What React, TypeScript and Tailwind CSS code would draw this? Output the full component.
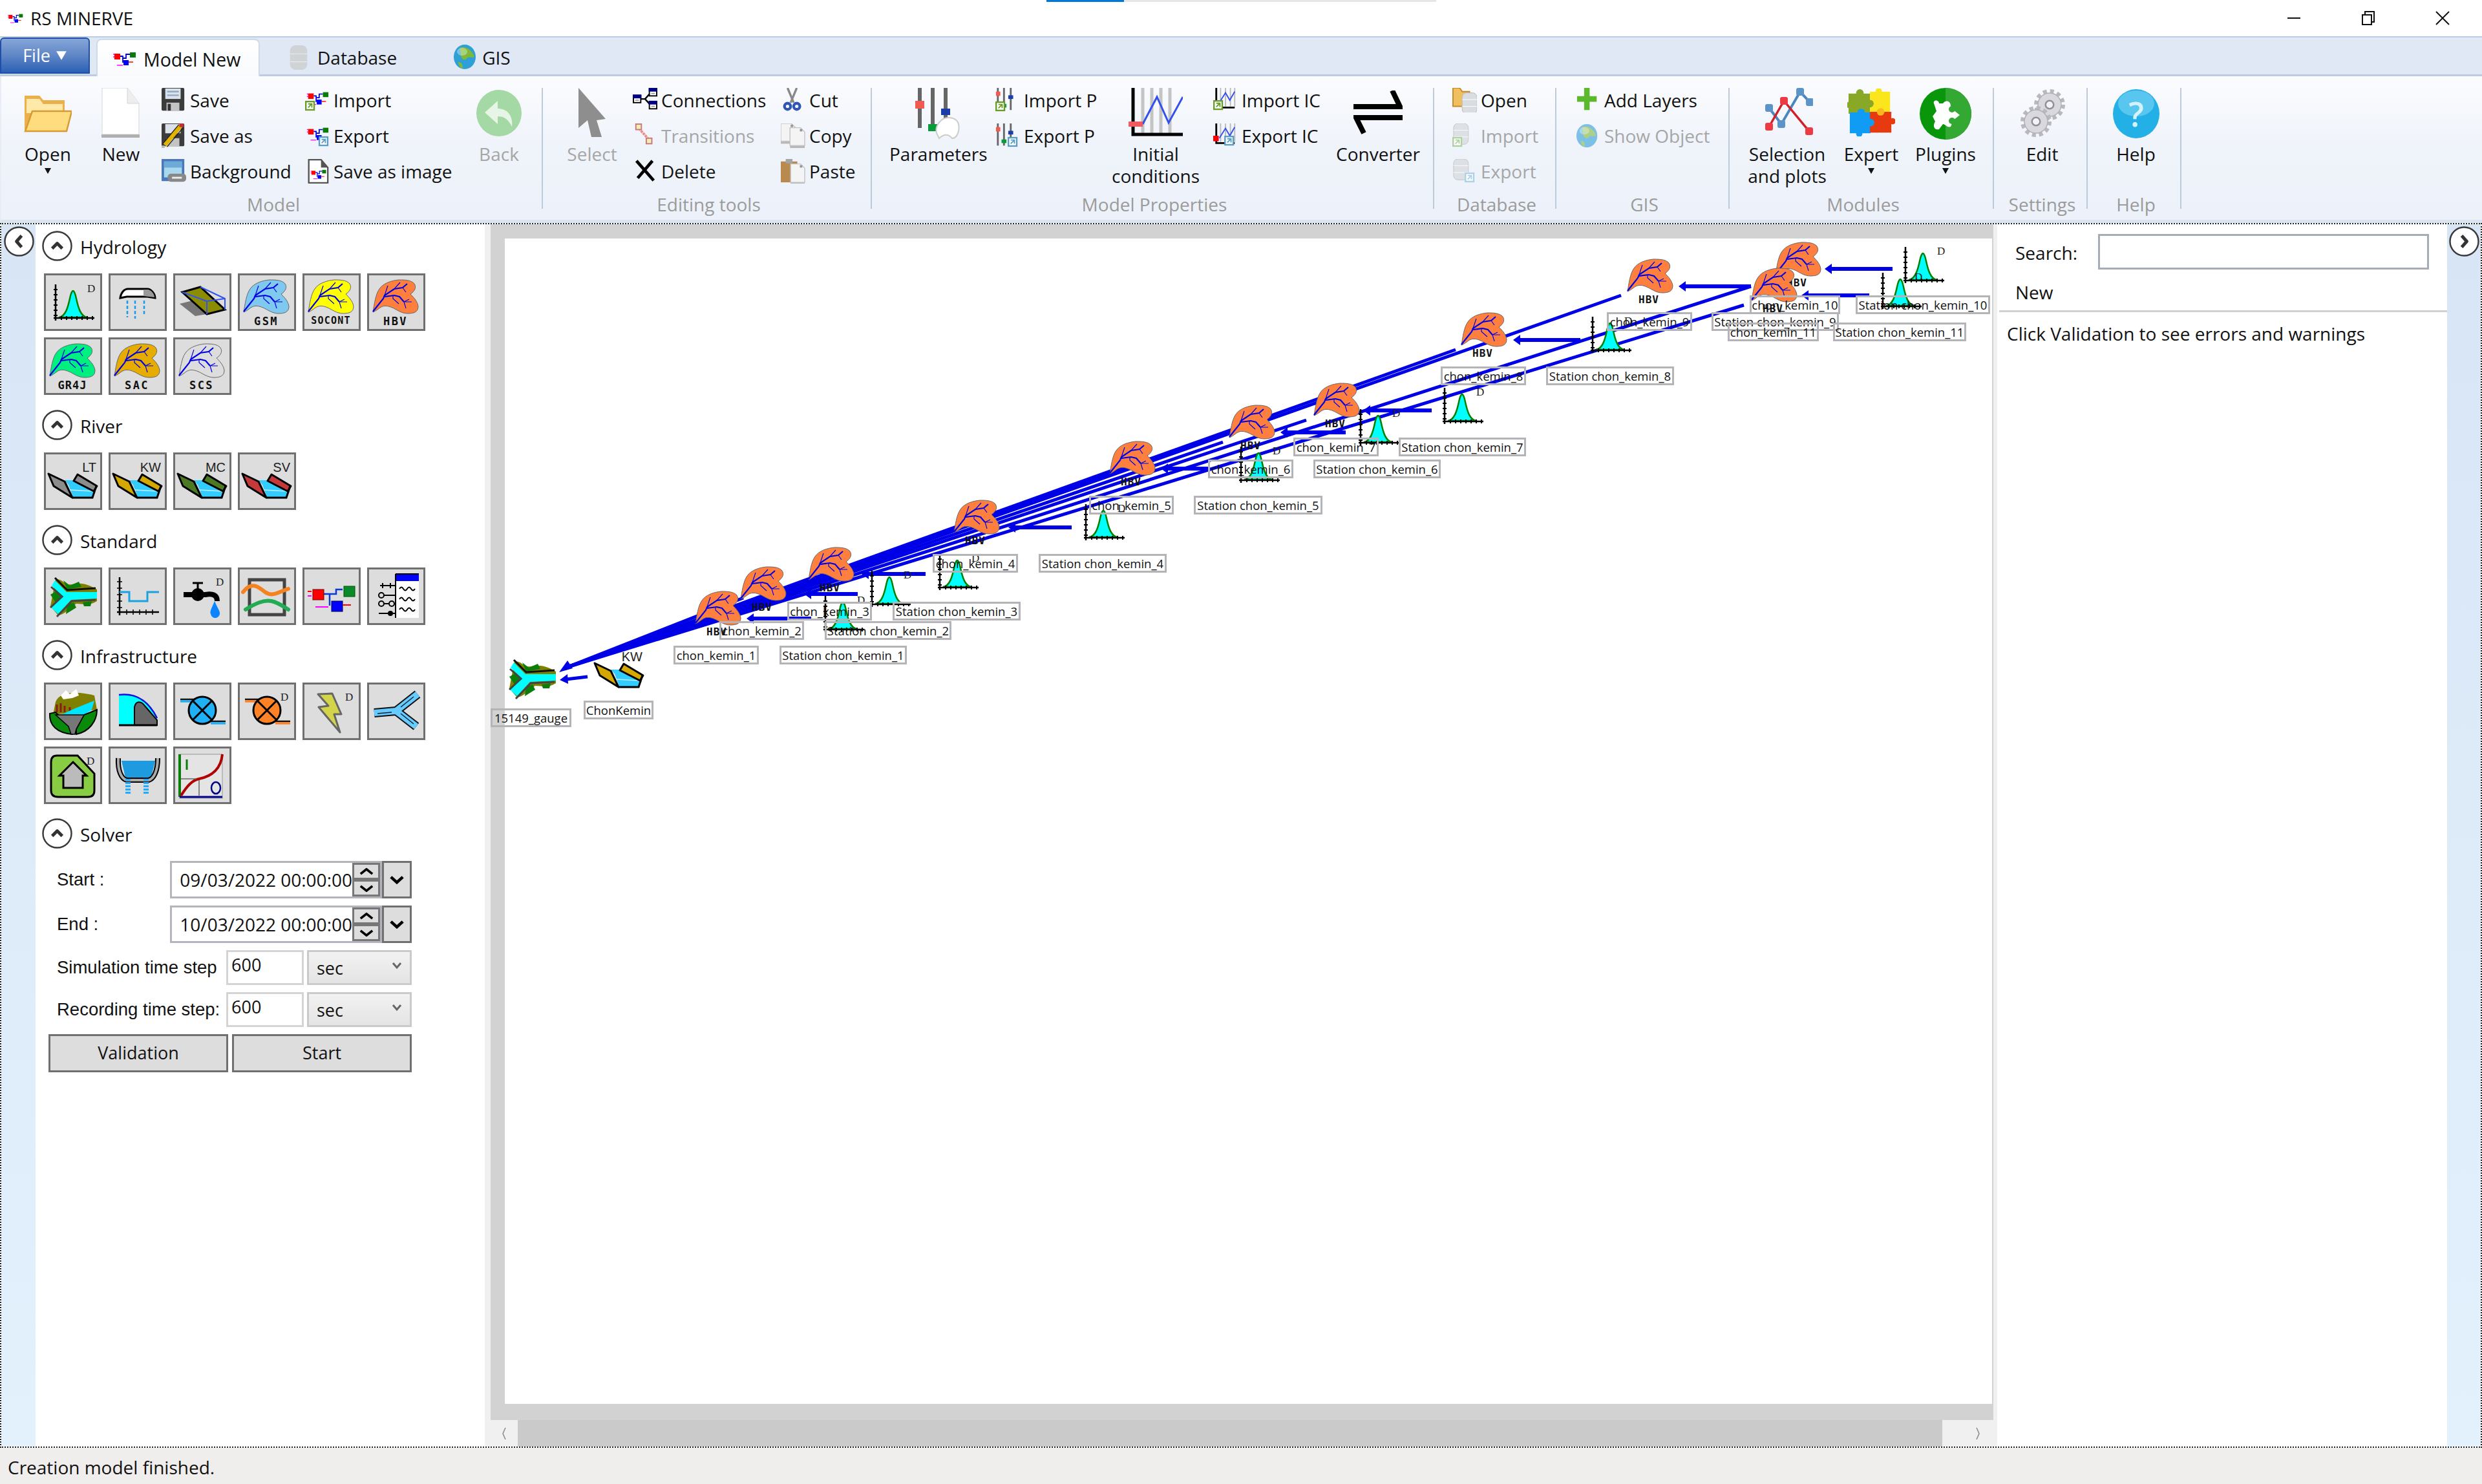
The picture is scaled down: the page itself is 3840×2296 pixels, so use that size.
import React from 'react';

const BLUE = '#0000e6';

// ---- shared drawings, coordinates are the 90x89 tool button space ----
const Leaf = ({ x = 0, y = 0, fill = '#ff7f3f' }: { x?: number; y?: number; fill?: string }) => (
  <g transform={`translate(${x} ${y})`}>
    <path
      d="M1 50 C3 38 5 22 11 14 C17 5 30 1 41 0 C50 0 60 0 65 6 C69 12 65 18 59 22 C63 26 70 33 71 41 C71 50 64 52 55 52 C45 52 38 46 31 43 C24 40 18 39 12 43 C8 46 4 49 1 50Z"
      fill={fill}
      stroke="#666"
      strokeWidth="1"
    />
    <path d="M1 49 L17 29 L19 24 L34 14 L47 12 L54 6 M19 26 L34 24 L42 26 L49 34" fill="none" stroke={BLUE} strokeWidth="2.2" />
    <path
      d="M19 24 L24 9 M34 14 L43 4 M47 12 L52 19 M49 34 L57 30 M49 34 L61 34 M49 34 L52 44 M32 24 V29 L41 37"
      fill="none"
      stroke={BLUE}
      strokeWidth="1.2"
    />
  </g>
);

const Hydrograph = ({ x = 0, y = 0 }: { x?: number; y?: number }) => (
  <g transform={`translate(${x} ${y})`}>
    <path d="M8 51 C18 50 22 36 25 22 C27 12 29 10 30 10 C31 10 33 12 35 22 C38 36 42 50 52 51Z" fill="#00ffff" stroke="#008000" strokeWidth="2.5" />
    <path d="M3 0 V56 M0 52 H63" stroke="#000" strokeWidth="2.5" />
    <path d="M0 8 H6 M0 16 H6 M0 24 H6 M0 32 H6 M0 40 H6 M0 48 H6 M12 49 V55 M20 49 V55 M28 49 V55 M36 49 V55 M44 49 V55 M52 49 V55 M60 49 V55" stroke="#000" strokeWidth="2" />
    <text x="52" y="12" fontFamily="Liberation Serif, serif" fontSize="17" fill="#222">D</text>
  </g>
);

const DMark = () => (
  <text x="66" y="28" fontFamily="Liberation Serif, serif" fontSize="17" fill="#222">D</text>
);

const GaugeIcon = () => (
  <g>
    <path d="M18 18 C30 18 32 28 44 26 C60 22 72 28 82 34 L82 52 C70 60 60 56 50 56 C40 62 34 72 22 74 L10 60 Z" fill="#808000" />
    <path d="M30 20 L40 28 L54 22 L58 30 L36 34Z M10 42 L24 34 L30 46 L18 54Z M36 58 L46 54 L50 62 L34 72Z M60 54 L74 52 L72 60 L62 60Z" fill="#0a7d0a" />
    <polygon points="17,20 35,38 82,38 82,48 42,50 22,72 11,62 30,45 12,28" fill="#00ffff" />
    <path d="M17 16 L36 35 L80 32" fill="none" stroke="#111" strokeWidth="3" />
    <path d="M11 30 L28 45 L10 62 M20 76 L43 52 L80 50" fill="none" stroke="#444" strokeWidth="3" />
  </g>
);

const RiverIcon = ({ fill, label }: { fill: string; label: string }) => (
  <g>
    <polygon points="32,43 56,43 80,61 75,69 45,69 38,50" fill="#33ccff" />
    <path d="M40 58 L76 60" stroke="#bdf0ff" strokeWidth="1.5" />
    <polygon points="7,33 32,45 44,70 15,52" fill={fill} stroke="#000" strokeWidth="3" strokeLinejoin="round" />
    <polygon points="52,34 82,52 77,60 46,44" fill={fill} stroke="#000" strokeWidth="3" strokeLinejoin="round" />
    <path d="M44 70 H75 L81 52" fill="none" stroke="#000" strokeWidth="3" />
    <text x="81" y="30" textAnchor="end" fontFamily="Liberation Sans, sans-serif" fontSize="20" fill="#222">{label}</text>
  </g>
);

const Catchment = ({ fill, tag, size = 17, spacing = 2.5, base = 80 }: { fill: string; tag: string; size?: number; spacing?: number; base?: number }) => (
  <g>
    <Leaf x={8} y={10} fill={fill} />
    <text x="44" y={base} textAnchor="middle" fontFamily="DejaVu Sans Mono, monospace" fontWeight="700" fontSize={size} letterSpacing={spacing} fill="#111">{tag}</text>
  </g>
);

const Pump = ({ fill, pipe }: { fill: string; pipe: string }) => (
  <g>
    <path d="M11 26 H36 M58 60 H81" stroke="#111" strokeWidth="2.5" />
    <path d="M11 30 H36 M58 64 H81" stroke={pipe} strokeWidth="3.5" transform="translate(0 -1)" />
    <circle cx="45" cy="43" r="21" fill={fill} stroke="#000" strokeWidth="3" />
    <path d="M31 29 L59 57 M59 29 L31 57" stroke="#000" strokeWidth="3" />
  </g>
);

const toolIcons: Record<string, React.ReactNode> = {
  hydrograph: <Hydrograph x={15} y={17} />,
  rain: (
    <g>
      <path d="M18 38 C19 30 24 24 30 24 H60 C66 24 72 32 72 38 L60 36 H28Z" fill="#fff" stroke="#000" strokeWidth="3" />
      <path d="M54 25 H60 C66 25 71 32 71 37 L54 35Z" fill="#999" />
      <path d="M29 42 V68 M41 42 V70 M55 42 V66" stroke="#1a9be8" strokeWidth="2.5" strokeDasharray="5 3" />
    </g>
  ),
  plane: (
    <g>
      <polygon points="10,47 38,40 52,63 34,66" fill="#777" />
      <polygon points="14,29 42,21 80,56 52,63" fill="#8c8c00" stroke="#000" strokeWidth="3" />
      <path d="M42 21 L80 39 V56 M14 29 L52 43 V63 M52 43 L80 39" fill="none" stroke="#3355ee" strokeWidth="2" />
    </g>
  ),
  gsm: <Catchment fill="#7fc8f0" tag="GSM" />,
  socont: <Catchment fill="#ffff00" tag="SOCONT" size={15} spacing={1.2} base={78} />,
  hbv: <Catchment fill="#ff7f3f" tag="HBV" />,
  gr4j: <Catchment fill="#00f07f" tag="GR4J" spacing={1} />,
  sac: <Catchment fill="#e6ac00" tag="SAC" />,
  scs: <Catchment fill="#dddddd" tag="SCS" />,
  lt: <RiverIcon fill="#8c8c8c" label="LT" />,
  kw: <RiverIcon fill="#d4a800" label="KW" />,
  mc: <RiverIcon fill="#4c7a22" label="MC" />,
  sv: <RiverIcon fill="#c43a3a" label="SV" />,
  gauge: <GaugeIcon />,
  step: (
    <g>
      <path d="M17 15 V74 M13 69 H78" stroke="#000" strokeWidth="2.5" />
      <path d="M13 22 H21 M13 32 H21 M13 42 H21 M13 52 H21 M13 62 H21 M28 65 V73 M38 65 V73 M48 65 V73 M58 65 V73 M68 65 V73" stroke="#000" strokeWidth="1.5" />
      <path d="M17 38 H32 V52 H60 V38 H78" fill="none" stroke="#1ba1e2" strokeWidth="3" />
    </g>
  ),
  tap: (
    <g>
      <path d="M16 42 H50 C60 40 68 42 68 52" fill="none" stroke="#000" strokeWidth="8" />
      <circle cx="38" cy="42" r="10" fill="#000" />
      <path d="M30 24 H46 M38 24 V34" stroke="#000" strokeWidth="3" />
      <path d="M64 52 C60 62 56 68 58 72 C60 80 70 80 72 72 C73 68 68 62 64 52Z" fill="#0a84ff" />
      <DMark />
    </g>
  ),
  curves: (
    <g>
      <rect x="18" y="19" width="54" height="54" fill="none" stroke="#444" strokeWidth="5" />
      <path d="M8 38 C20 22 30 28 42 38 C54 46 62 38 78 33" fill="none" stroke="#f58220" strokeWidth="6" strokeLinecap="round" />
      <path d="M12 65 C28 55 40 50 52 52 C62 54 70 60 78 65" fill="none" stroke="#22aa55" strokeWidth="6" strokeLinecap="round" />
    </g>
  ),
  model: (
    <g>
      <path d="M33 41 H42 V59 M42 41 H52 V34 H62" fill="none" stroke="#0a3ad6" strokeWidth="2.5" />
      <rect x="16" y="34" width="17" height="16" fill="#ff0000" stroke="#700" />
      <rect x="64" y="29" width="17" height="16" fill="#0a8a2a" stroke="#050" />
      <rect x="45" y="52" width="17" height="16" fill="#0000ff" stroke="#004" />
      <path d="M8 37 H14" stroke="#f00" strokeWidth="2" />
      <path d="M8 44 H14 M20 61 H40" stroke="#f0f" strokeWidth="2" />
      <path d="M62 58 H75" stroke="#f00" strokeWidth="2" />
    </g>
  ),
  list: (
    <g>
      <rect x="45" y="10" width="35" height="68" fill="#fff" />
      <rect x="44" y="11" width="36" height="10" fill="#0000ff" />
      <path d="M44 10 H80 M44 10 V78" stroke="#000" strokeWidth="2" />
      <path d="M20 28 H44 M24 24 V32 M36 24 V32 M26 43 H44 M18 71 H44" stroke="#000" strokeWidth="2" fill="none" />
      <circle cx="22" cy="43" r="4" fill="none" stroke="#000" strokeWidth="2" />
      <circle cx="22" cy="56" r="4" fill="none" stroke="#000" strokeWidth="2" />
      <circle cx="38" cy="56" r="4" fill="none" stroke="#000" strokeWidth="2" />
      <path d="M26 56 H34 M42 56 H44" stroke="#000" strokeWidth="2" />
      <circle cx="36" cy="71" r="4" fill="#000" />
      <path d="M50 33 q3 -5 6 0 t6 0 t6 0 t6 0 M50 49 q3 -5 6 0 t6 0 t6 0 t6 0 M50 65 q3 -5 6 0 t6 0 t6 0 t6 0" fill="none" stroke="#000" strokeWidth="2" />
    </g>
  ),
  reservoir: (
    <g>
      <path d="M18 30 C25 12 55 14 78 20 L82 42 L14 50Z" fill="#808000" />
      <path d="M26 20 L34 12 L40 18 L50 10 L54 20 L44 24 L30 26Z" fill="#fff" />
      <path d="M20 34 V46 M26 32 V46 M32 36 V46 M40 38 V44" stroke="#8c1c1c" strokeWidth="3" />
      <polygon points="22,52 48,40 78,28 74,42 62,50 36,52" fill="#00e5ff" />
      <path d="M9 48 C8 66 20 78 44 80 L44 72 L18 46Z" fill="#0a8a0a" stroke="#000" strokeWidth="2" />
      <path d="M50 80 C70 76 82 60 82 42 L62 50 L50 72 Z" fill="#0a8a0a" stroke="#000" strokeWidth="2" />
      <polygon points="18,50 62,50 50,72 48,80 42,80 38,68" fill="#777" stroke="#000" strokeWidth="1.5" />
    </g>
  ),
  dam: (
    <g>
      <path d="M16 19 C40 16 60 25 75 55 V66 H16Z" fill="#00ffff" />
      <path d="M16 19 C40 16 60 25 75 55" fill="none" stroke="#1111dd" strokeWidth="2.5" />
      <path d="M40 66 V38 C42 28 50 28 56 36 L75 58 V66Z" fill="#666" stroke="#000" strokeWidth="2" />
      <path d="M16 66 H75" stroke="#000" strokeWidth="3" />
    </g>
  ),
  pumpBlue: <Pump fill="#1fb0f5" pipe="#1fb0f5" />,
  pumpOrange: (
    <g>
      <Pump fill="#ff8326" pipe="#ff8326" />
      <DMark />
    </g>
  ),
  bolt: (
    <g>
      <polygon points="24,18 46,17 60,49 49,49 58,77 25,38 40,36" fill="#d4d44a" stroke="#666" strokeWidth="3" strokeLinejoin="round" />
      <DMark />
    </g>
  ),
  junction: (
    <g>
      <path d="M11 47 L45 44 L78 18 M45 44 L76 68" fill="none" stroke="#111" strokeWidth="14" />
      <path d="M11 47 L45 44 L78 18 M45 44 L76 68" fill="none" stroke="#66ccff" strokeWidth="10" />
      <path d="M16 48 L38 46 M52 38 L72 22 M52 48 L72 64" stroke="#123" strokeWidth="1.5" />
    </g>
  ),
  house: (
    <g>
      <path d="M20 14 H52 L78 42 V68 Q78 78 68 78 H22 Q11 78 11 68 V24 Q11 14 20 14Z" fill="#88cc44" stroke="#000" strokeWidth="3" />
      <polygon points="45,24 66,45 60,45 60,64 30,64 30,45 24,45" fill="#bbb" stroke="#000" strokeWidth="3" />
      <DMark />
    </g>
  ),
  tub: (
    <g>
      <polygon points="20,22 72,22 66,48 26,48" fill="#1e9be0" />
      <path d="M15 18 C14 38 20 50 28 52 H62 C70 50 76 38 76 18" fill="none" stroke="#000" strokeWidth="8" />
      <path d="M15 18 C14 38 20 50 28 52 H62 C70 50 76 38 76 18" fill="none" stroke="#aaa" strokeWidth="4" />
      <path d="M30 50 V74 M58 50 V74" stroke="#22aaff" strokeWidth="8" strokeDasharray="3 2" />
    </g>
  ),
  rating: (
    <g>
      <rect x="10" y="12" width="66" height="68" fill="#e4e4e4" stroke="#bbb" strokeWidth="2" />
      <path d="M10 12 V78" stroke="#0a7d0a" strokeWidth="4" />
      <path d="M10 78 H76" stroke="#00008b" strokeWidth="3" />
      <path d="M12 76 C22 60 30 52 40 50 C60 46 74 34 76 12" fill="none" stroke="#b00000" strokeWidth="4" />
      <path d="M21 20 V36" stroke="#0a7d0a" strokeWidth="3" />
      <path d="M12 50 H36 M40 52 V76" stroke="#666" strokeWidth="1.5" />
      <ellipse cx="66" cy="64" rx="7" ry="9" fill="none" stroke="#00008b" strokeWidth="2.5" />
    </g>
  ),
};

const ToolButton = ({ name }: { name: string }) => (
  <button className="w-[90px] h-[89px] border-[3px] border-[#707070] bg-[#dddddd]">
    <svg viewBox="3 3 84 83" className="w-[84px] h-[83px] block">{toolIcons[name]}</svg>
  </button>
);

const ChevronCircle = ({ dir = 'up' }: { dir?: 'up' | 'left' | 'right' }) => {
  const d = dir === 'up' ? 'M-8 4 L0 -4 L8 4' : dir === 'left' ? 'M4 -9 L-4 0 L4 9' : 'M-4 -9 L4 0 L-4 9';
  return (
    <svg viewBox="-24 -24 48 48" className="w-[47px] h-[47px] shrink-0">
      <circle r="22.5" fill="#fff" stroke="#3a3a3a" strokeWidth="2.5" />
      <path d={d} fill="none" stroke="#333" strokeWidth="5" strokeLinejoin="round" />
    </svg>
  );
};

const SectionHead = ({ title, className }: { title: string; className: string }) => (
  <div className={`flex h-[47px] items-center gap-[12px] ml-[10px] ${className}`}>
    <ChevronCircle />
    <span className="text-[28px] leading-[43px] pt-[4px] text-[#111]">{title}</span>
  </div>
);

const ToolGrid = ({ names }: { names: string[] }) => (
  <div className="grid grid-cols-[repeat(6,90px)] gap-[10px] ml-[13px] mt-[19px]">
    {names.map((n) => (
      <ToolButton key={n} name={n} />
    ))}
  </div>
);

const DateField = ({ value }: { value: string }) => (
  <div className="flex h-[58px] w-[374px]">
    <div className="flex items-center justify-end flex-1 border-[3px] border-[#b4b4bc] bg-white pr-[43px] relative">
      <span className="text-[28px] text-[#111]">{value}</span>
      <div className="absolute right-0 top-0 bottom-0 w-[43px] flex flex-col">
        {[0, 1].map((i) => (
          <div key={i} className="flex-1 flex items-center justify-center border-[3px] border-[#777] bg-[#dddddd]">
            <svg viewBox="0 0 24 12" className="w-[22px] h-[11px]">
              <path d={i === 0 ? 'M2 10 L12 2 L22 10' : 'M2 2 L12 10 L22 2'} fill="none" stroke="#000" strokeWidth="4" />
            </svg>
          </div>
        ))}
      </div>
    </div>
    <div className="w-[46px] flex items-center justify-center border-[3px] border-[#707070] bg-[#dddddd]">
      <svg viewBox="0 0 24 14" className="w-[22px] h-[13px]">
        <path d="M2 2 L12 11 L22 2" fill="none" stroke="#000" strokeWidth="5" />
      </svg>
    </div>
  </div>
);

const StepRow = ({ label, className }: { label: string; className: string }) => (
  <div className={`flex h-[54px] ${className}`}>
    <span className="w-[262px] font-['Liberation_Sans',sans-serif] text-[27.5px] leading-[54px] text-[#111] whitespace-nowrap">{label}</span>
    <div className="w-[120px] border-[3px] border-[#d4d4d4] bg-white pl-[5px] text-[27px] leading-[40px] text-[#111]">600</div>
    <div className="w-[162px] ml-[5px] border-[3px] border-[#cacaca] bg-gradient-to-b from-[#f2f2f2] to-[#e4e4e4] pl-[12px] flex justify-between text-[27px] leading-[50px] text-[#111]">
      sec
      <svg viewBox="0 0 16 12" className="w-[16px] h-[12px] mt-[15px] mr-[12px]">
        <path d="M2 2 L8 9 L14 2" fill="none" stroke="#666" strokeWidth="3" />
      </svg>
    </div>
  </div>
);

// ---- ribbon drawings ----
const ModelGlyph = () => (
  <g>
    <path d="M11 7 H15 V17 M15 10 H20 V4 H26" fill="none" stroke="#0000dd" strokeWidth="1.8" />
    <path d="M24 16 H31" stroke="#f00" strokeWidth="1.5" />
    <path d="M0 4 H2 M0 8 H2 M6 21 H15" stroke="#f0f" strokeWidth="1.5" />
    <rect x="2" y="3" width="9" height="9" fill="#f00" />
    <rect x="26" y="1" width="9" height="8" fill="#0a7a0a" />
    <rect x="16" y="13" width="8" height="8" fill="#00f" />
  </g>
);
const Badge = ({ x, y, color }: { x: number; y: number; color: string }) => (
  <g transform={`translate(${x} ${y})`}>
    <rect width="16" height="16" fill={color} />
    <rect x="2.5" y="2.5" width="11" height="11" fill="#fff" />
    <path d="M5 5 H11 V11 M11 5 L5 11" fill="none" stroke={color} strokeWidth="2" />
  </g>
);
const Sliders = () => (
  <g>
    <path d="M4 0 V36 M14 0 V36 M25 0 V36" stroke="#666" strokeWidth="3" />
    <rect x="1" y="6" width="7" height="7" fill="#f05a50" />
    <rect x="21" y="12" width="8" height="6" fill="#1a3ea8" />
    <rect x="10" y="26" width="8" height="6" fill="#0a9a3a" />
  </g>
);
const ChartMini = () => (
  <g>
    <path d="M12 0 V30 M20 0 V30 M28 0 V30 M35 0 V30" stroke="#bbb" strokeWidth="2" />
    <path d="M5 0 V32 H35" fill="none" stroke="#000" strokeWidth="3" />
    <path d="M10 24 L20 8 L27 20 L35 6" fill="none" stroke="#3350ee" strokeWidth="2" />
  </g>
);
const DbGlyph = ({ x = 0, y = 0 }: { x?: number; y?: number }) => (
  <g transform={`translate(${x} ${y})`}>
    <rect width="24" height="34" rx="7" fill="#d9dce0" stroke="#bbb" />
    <path d="M0 11 H24 M0 22 H24" stroke="#fff" />
  </g>
);
const Globe = () => (
  <g>
    <ellipse cx="18" cy="20" rx="17" ry="19" fill="#2f9fd8" />
    <path d="M10 6 C20 2 30 10 33 20 C28 22 22 18 20 24 C14 26 10 18 12 14Z" fill="#7fb93a" />
    <path d="M8 28 C14 28 16 34 14 38 C10 36 8 32 8 28Z" fill="#7fb93a" />
    <ellipse cx="14" cy="12" rx="8" ry="6" fill="#fff" opacity="0.35" />
  </g>
);
const Page = ({ x, y, w, h }: { x: number; y: number; w: number; h: number }) => (
  <g transform={`translate(${x} ${y})`}>
    <rect x="0" y={h} width={w} height="4" fill="#b8b8b8" />
    <path d={`M0 0 H${w - 7} L${w} 7 V${h} H0Z`} fill="#f4f4f4" stroke="#c4c4c4" strokeWidth="1.5" />
    <rect x={w - 8} y="2" width="4" height="4" fill="#999" />
  </g>
);
const ConnBox = ({ x, y }: { x: number; y: number }) => (
  <g transform={`translate(${x} ${y})`}>
    <rect x="1" y="1" width="12" height="12" fill="#fff" stroke="#000" strokeWidth="2" />
    <rect width="14" height="6" fill="#000080" />
    <path d="M4 9 H10" stroke="#888" strokeWidth="1.5" />
  </g>
);

const smallIcons: Record<string, React.ReactNode> = {
  save: (
    <g>
      <rect x="0" width="37" height="37" rx="2" fill="#3c3c3c" />
      <rect x="6" y="1" width="25" height="17" fill="#dbe2ea" />
      <path d="M9 6 H28 M9 12 H28" stroke="#8eabc8" strokeWidth="2.5" />
      <rect x="8" y="24" width="21" height="13" fill="#c4c4c4" />
      <rect x="10" y="26" width="5" height="11" fill="#333" />
    </g>
  ),
  saveAs: (
    <g>
      <rect x="0" width="37" height="37" rx="2" fill="#3c3c3c" />
      <rect x="6" y="1" width="25" height="15" fill="#dbe2ea" />
      <rect x="8" y="24" width="21" height="13" fill="#c4c4c4" />
      <path d="M5 35 L31 4" stroke="#e2b400" strokeWidth="7" />
      <path d="M2 33 L28 2 M9 38 L35 7" stroke="#222" strokeWidth="1.5" />
      <rect x="29" y="0" width="7" height="6" fill="#c03030" />
      <rect x="0" y="36" width="5" height="4" fill="#bbb" />
    </g>
  ),
  background: (
    <g>
      <rect x="0" width="37" height="36" fill="#4a78b8" />
      <rect x="4" y="4" width="29" height="26" fill="#a8d8ee" />
      <rect x="4" y="4" width="29" height="10" fill="#6eaad8" />
      <rect x="10" y="24" width="30" height="13" rx="5" fill="#888" />
      <rect x="17" y="29" width="16" height="3" fill="#eee" />
    </g>
  ),
  import: (
    <g>
      <g transform="translate(3 6)">
        <ModelGlyph />
      </g>
      <Badge x={0} y={21} color="#6a9c2c" />
    </g>
  ),
  export: (
    <g>
      <g transform="translate(3 6)">
        <ModelGlyph />
      </g>
      <Badge x={22} y={21} color="#5a9ec4" />
    </g>
  ),
  image: (
    <g>
      <path d="M6 1 H26 L37 14 V39 H6Z" fill="#fff" stroke="#555" strokeWidth="2.5" strokeLinejoin="round" />
      <path d="M26 1 L37 14 H26Z" fill="#555" />
      <g transform="translate(9 17) scale(0.72)">
        <ModelGlyph />
      </g>
    </g>
  ),
  connections: (
    <g>
      <path d="M12 18 H20 L29 8 M20 18 L29 28" fill="none" stroke="#000" strokeWidth="2.5" />
      <ConnBox x={0} y={11} />
      <ConnBox x={26} y={0} />
      <ConnBox x={26} y={21} />
    </g>
  ),
  transitions: (
    <g>
      <path d="M10 8 L26 26" stroke="#f08a8a" strokeWidth="4" strokeDasharray="4 1" />
      <rect x="5" y="1" width="9" height="9" fill="#f4ecb4" stroke="#c87878" strokeWidth="2" />
      <rect x="22" y="24" width="9" height="9" fill="#f4ecb4" stroke="#c87878" strokeWidth="2" />
    </g>
  ),
  delete: <path d="M6 3 L34 35 M32 3 L8 31" stroke="#000" strokeWidth="5" />,
  cut: (
    <g>
      <path d="M11 0 L21 24 M26 0 L16 24" stroke="#888" strokeWidth="3.5" />
      <circle cx="11" cy="30" r="5" fill="none" stroke="#2f55b5" strokeWidth="4.5" />
      <circle cx="26" cy="30" r="5" fill="none" stroke="#2f55b5" strokeWidth="4.5" />
    </g>
  ),
  copy: (
    <g>
      <Page x={0} y={0} w={24} h={29} />
      <Page x={15} y={7} w={24} h={29} />
    </g>
  ),
  paste: (
    <g>
      <rect x="0" y="4" width="27" height="34" fill="#b98a4e" />
      <rect x="8" y="0" width="11" height="7" fill="#a4a4a4" />
      <Page x={16} y={8} w={23} h={30} />
    </g>
  ),
  importP: (
    <g>
      <Sliders />
      <Badge x={0} y={22} color="#6a9c2c" />
    </g>
  ),
  exportP: (
    <g>
      <Sliders />
      <Badge x={20} y={22} color="#5a9ec4" />
    </g>
  ),
  importIC: (
    <g>
      <ChartMini />
      <Badge x={0} y={20} color="#6a9c2c" />
    </g>
  ),
  exportIC: (
    <g>
      <ChartMini />
      <rect x="0" y="20" width="9" height="9" fill="#f00" />
      <Badge x={18} y={20} color="#5a9ec4" />
    </g>
  ),
  dbOpen: (
    <g>
      <path d="M1 0 H12 L16 6 H28 V30 H1Z" fill="#f0c060" stroke="#c68a2a" strokeWidth="2" />
      <DbGlyph x={16} y={8} />
    </g>
  ),
  dbImport: (
    <g opacity="0.8">
      <DbGlyph x={2} y={0} />
      <Badge x={0} y={22} color="#a3c98a" />
    </g>
  ),
  dbExport: (
    <g opacity="0.8">
      <DbGlyph x={2} y={0} />
      <Badge x={20} y={22} color="#9fcbe0" />
    </g>
  ),
  plus: <path d="M18 0 V36 M2 18 H34" stroke="#5cb82c" strokeWidth="9" />,
  globe: (
    <g opacity="0.6">
      <Globe />
    </g>
  ),
};

const SmallItem = ({ icon, label, disabled }: { icon: string; label: string; disabled?: boolean }) => (
  <div className="flex items-center h-[38px] gap-[6px]">
    <svg viewBox="0 0 40 40" className="w-[38px] h-[38px] shrink-0">{smallIcons[icon]}</svg>
    <span className={`whitespace-nowrap ${disabled ? 'text-[#a6a6a6]' : 'text-[#111]'}`}>{label}</span>
  </div>
);

const SmallCol = ({ className = '', children }: { className?: string; children: React.ReactNode }) => (
  <div className={`flex flex-col gap-[17px] shrink-0 ${className}`}>{children}</div>
);

const Arrow = () => (
  <svg viewBox="0 0 12 12" className="w-[12px] h-[14px] mx-auto mt-[2px]">
    <path d="M1 2 H11 L6 11Z" fill="#111" />
  </svg>
);

const LargeItem = ({
  className,
  label,
  disabled,
  arrow,
  children,
}: {
  className: string;
  label: string[];
  disabled?: boolean;
  arrow?: boolean;
  children: React.ReactNode;
}) => (
  <div className={`shrink-0 text-center ${className}`}>
    <div className="h-[85px] flex justify-center items-start">{children}</div>
    {label.map((l) => (
      <div key={l} className={`leading-[34px] whitespace-nowrap ${disabled ? 'text-[#a6a6a6]' : 'text-[#111]'}`}>
        {l}
      </div>
    ))}
    {arrow && <Arrow />}
  </div>
);

const Group = ({ width, label, children }: { width: string; label: string; children: React.ReactNode }) => (
  <div className={`${width} h-[187px] shrink-0 border-r-2 border-[#bdcad9]`}>
    <div className="h-[160px] flex">{children}</div>
    <div className="h-[27px] pl-[6px] text-center leading-[40px] text-[#9b9b9b]">{label}</div>
  </div>
);

const Gear = ({ cx, cy, r }: { cx: number; cy: number; r: number }) => (
  <g>
    <circle cx={cx} cy={cy} r={r + 3} fill="none" stroke="#b8b8be" strokeWidth="6" strokeDasharray="6 5" />
    <circle cx={cx} cy={cy} r={r} fill="#d8d8de" stroke="#b0b0b6" strokeWidth="1.5" />
    <circle cx={cx} cy={cy} r={r * 0.35} fill="#f0f3f9" stroke="#909096" strokeWidth="2.5" />
  </g>
);

const Ribbon = () => (
  <div className="h-[227px] pt-[18px] flex bg-gradient-to-b from-[#fbfcfe] via-[#eff3fa] to-[#edf2fa] border-b-[5px] border-[#dbe5f1] border-l-2 border-l-[#e6edf6] text-[28px]">
    <Group width="w-[838px]" label="Model">
      <LargeItem className="w-[76px] ml-[34px]" label={['Open']} arrow>
        <svg viewBox="0 0 74 66" className="w-[74px] h-[66px] mt-[9px]">
          <path d="M1 3 H24 L30 10 H63 V56 H1Z" fill="#e9b04c" />
          <path d="M4 8 H24 L30 16 H60 V30 H4Z" fill="#ffe9a8" />
          <path d="M13 27 H74 L66 58 H2Z" fill="#ffdc7e" stroke="#d89a36" strokeWidth="2.5" />
        </svg>
      </LargeItem>
      <LargeItem className="w-[70px] ml-[40px]" label={['New']}>
        <svg viewBox="0 0 60 78" className="w-[60px] h-[78px]">
          <path d="M1 0 H40 L58 24 V72 H1Z" fill="#fff" stroke="#e2e2e2" strokeWidth="1.5" />
          <path d="M40 0 V24 H58" fill="#eee" stroke="#d4d4d4" />
          <rect x="0" y="72" width="59" height="5" fill="#b0b0b0" />
        </svg>
      </LargeItem>
      <SmallCol className="w-[222px] ml-[28px]">
        <SmallItem icon="save" label="Save" />
        <SmallItem icon="saveAs" label="Save as" />
        <SmallItem icon="background" label="Background" />
      </SmallCol>
      <SmallCol className="w-[264px]">
        <SmallItem icon="import" label="Import" />
        <SmallItem icon="export" label="Export" />
        <SmallItem icon="image" label="Save as image" />
      </SmallCol>
      <LargeItem className="w-[72px]" label={['Back']} disabled>
        <svg viewBox="0 0 72 74" className="w-[72px] h-[74px] mt-[2px]">
          <ellipse cx="36" cy="37" rx="35" ry="36" fill="#a4d8a4" />
          <path d="M14 36 L34 18 V30 C50 30 58 42 56 58 C50 46 44 42 34 42 V54Z" fill="#e6f5e6" />
        </svg>
      </LargeItem>
    </Group>
    <Group width="w-[509px]" label="Editing tools">
      <LargeItem className="w-[80px] ml-[36px]" label={['Select']} disabled>
        <svg viewBox="0 0 46 78" className="w-[46px] h-[78px]">
          <path d="M2 0 L44 48 L30 50 L38 76 L22 76 L16 50 L2 62Z" fill="#8e8e8e" />
        </svg>
      </LargeItem>
      <SmallCol className="w-[229px] ml-[23px]">
        <SmallItem icon="connections" label="Connections" />
        <SmallItem icon="transitions" label="Transitions" disabled />
        <SmallItem icon="delete" label="Delete" />
      </SmallCol>
      <SmallCol>
        <SmallItem icon="cut" label="Cut" />
        <SmallItem icon="copy" label="Copy" />
        <SmallItem icon="paste" label="Paste" />
      </SmallCol>
    </Group>
    <Group width="w-[870px]" label="Model Properties">
      <LargeItem className="w-[150px] ml-[27px]" label={['Parameters']}>
        <svg viewBox="0 0 80 80" className="w-[80px] h-[80px]">
          <path d="M12 0 V62 M32 0 V62 M52 0 V62" stroke="#666" strokeWidth="6" />
          <rect x="5" y="20" width="14" height="12" fill="#f05a50" />
          <rect x="45" y="32" width="14" height="10" fill="#1a3ea8" />
          <rect x="25" y="56" width="14" height="11" fill="#0a9a3a" />
          <path d="M38 70 C36 62 40 54 48 48 C56 44 70 46 72 56 C74 66 70 78 62 78 C56 70 48 72 42 78Z" fill="#fff" stroke="#ccc" strokeWidth="2" />
        </svg>
      </LargeItem>
      <SmallCol className="w-[168px] ml-[14px]">
        <SmallItem icon="importP" label="Import P" />
        <SmallItem icon="exportP" label="Export P" />
      </SmallCol>
      <LargeItem className="w-[160px]" label={['Initial', 'conditions']}>
        <svg viewBox="0 0 84 76" className="w-[84px] h-[76px]">
          <path d="M22 0 V72 M36 0 V72 M50 0 V72 M64 0 V72" stroke="#c4c4c4" strokeWidth="5" />
          <path d="M7 0 V72 H84" fill="none" stroke="#000" strokeWidth="5" />
          <path d="M22 56 L44 14 L62 54 L84 14" fill="none" stroke="#3350ee" strokeWidth="3" />
          <rect x="0" y="52" width="22" height="8" fill="#f05a60" />
        </svg>
      </LargeItem>
      <SmallCol className="w-[170px] ml-[9px]">
        <SmallItem icon="importIC" label="Import IC" />
        <SmallItem icon="exportIC" label="Export IC" />
      </SmallCol>
      <LargeItem className="w-[150px] ml-[10px]" label={['Converter']}>
        <svg viewBox="0 0 76 68" className="w-[76px] h-[68px] mt-[4px]">
          <path d="M0 25 H72 L60 0 M76 42 H4 L16 66" fill="none" stroke="#000" strokeWidth="8" />
        </svg>
      </LargeItem>
    </Group>
    <Group width="w-[189px]" label="Database">
      <SmallCol className="ml-[28px]">
        <SmallItem icon="dbOpen" label="Open" />
        <SmallItem icon="dbImport" label="Import" disabled />
        <SmallItem icon="dbExport" label="Export" disabled />
      </SmallCol>
    </Group>
    <Group width="w-[268px]" label="GIS">
      <SmallCol className="ml-[30px]">
        <SmallItem icon="plus" label="Add Layers" />
        <SmallItem icon="globe" label="Show Object" disabled />
      </SmallCol>
    </Group>
    <Group width="w-[409px]" label="Modules">
      <LargeItem className="w-[140px] ml-[19px]" label={['Selection', 'and plots']}>
        <svg viewBox="0 0 80 78" className="w-[80px] h-[78px]">
          <path d="M12 31 L31 56 L60 6 L75 22" fill="none" stroke="#4b86bf" strokeWidth="4" />
          <path d="M12 60 L35 20 L74 67" fill="none" stroke="#cf2028" strokeWidth="3.5" />
          <rect x="6" y="25" width="12" height="12" rx="3" fill="#5b94c8" />
          <rect x="25" y="50" width="12" height="12" rx="3" fill="#5b94c8" />
          <rect x="54" y="0" width="12" height="12" rx="3" fill="#5b94c8" />
          <rect x="69" y="16" width="12" height="12" rx="3" fill="#5b94c8" />
          <rect x="6" y="54" width="12" height="12" rx="3" fill="#ec3b44" />
          <rect x="29" y="14" width="12" height="12" rx="3" fill="#ec3b44" />
          <rect x="68" y="61" width="12" height="12" rx="3" fill="#ec3b44" />
        </svg>
      </LargeItem>
      <LargeItem className="w-[100px] ml-[10px]" label={['Expert']} arrow>
        <svg viewBox="0 0 76 76" className="w-[74px] h-[74px] mt-[1px]">
          <rect x="2" y="8" width="34" height="32" fill="#8aa828" />
          <circle cx="20" cy="7" r="6" fill="#8aa828" />
          <circle cx="3" cy="26" r="5" fill="#8aa828" />
          <rect x="36" y="5" width="32" height="33" fill="#fbe61e" />
          <circle cx="50" cy="4" r="5" fill="#fbe61e" />
          <circle cx="36" cy="24" r="6" fill="#8aa828" />
          <rect x="4" y="38" width="33" height="33" fill="#109cf4" />
          <circle cx="22" cy="38" r="6" fill="#109cf4" />
          <circle cx="19" cy="72" r="5" fill="#109cf4" />
          <rect x="36" y="37" width="34" height="33" fill="#e83a10" />
          <circle cx="53" cy="37" r="6" fill="#f8b81e" />
          <circle cx="72" cy="52" r="5" fill="#e83a10" />
          <circle cx="37" cy="54" r="6" fill="#109cf4" />
        </svg>
      </LargeItem>
      <LargeItem className="w-[110px] ml-[10px]" label={['Plugins']} arrow>
        <svg viewBox="0 0 80 80" className="w-[80px] h-[80px]">
          <circle cx="40" cy="40" r="40" fill="#0a960a" />
          <path d="M40 0 A40 40 0 0 1 40 80Z" fill="#33a833" />
          <path d="M22 24 C20 18 30 18 30 24 L36 24 C40 18 48 20 48 28 L52 34 L62 42 L52 50 L48 60 C42 62 40 56 36 56 L30 64 C22 66 20 58 24 52 L20 44 L26 36Z" fill="#fff" />
          <circle cx="50" cy="33" r="5" fill="#33a833" />
          <circle cx="50" cy="51" r="5" fill="#33a833" />
        </svg>
      </LargeItem>
    </Group>
    <Group width="w-[145px]" label="Settings">
      <LargeItem className="w-[145px] ml-[2px]" label={['Edit']}>
        <svg viewBox="0 0 74 76" className="w-[74px] h-[76px] mt-[2px]">
          <Gear cx={48} cy={24} r={18} />
          <Gear cx={27} cy={50} r={18} />
        </svg>
      </LargeItem>
    </Group>
    <Group width="w-[145px]" label="Help">
      <LargeItem className="w-[145px] ml-[2px]" label={['Help']}>
        <svg viewBox="0 0 72 76" className="w-[72px] h-[76px] mt-[2px]">
          <ellipse cx="36" cy="38" rx="36" ry="38" fill="#22b0e6" />
          <ellipse cx="36" cy="22" rx="28" ry="20" fill="#7ed6f5" opacity="0.6" />
          <text x="36" y="58" textAnchor="middle" fontFamily="Open Sans, sans-serif" fontWeight="600" fontSize="52" fill="#d4f2fc">?</text>
        </svg>
      </LargeItem>
    </Group>
  </div>
);

// ---- diagram, all values are page coordinates ----
const leaves = [
  [1075, 915], [1145, 877], [1250, 847], [1475, 774], [1716, 683], [1901, 627], [2032, 593], [2260, 484], [2517, 401], [2746, 375], [2709, 415],
];
const hydros = [
  [1274, 922], [1346, 883], [1451, 857], [1677, 780], [1917, 691], [2102, 633], [2232, 600], [2461, 490], [2945, 382], [2910, 422],
];
const arrows = [
  [2928, 416, 2823], [2892, 457, 2787], [2709, 443, 2597], [2445, 526, 2341], [2215, 635, 2109], [2082, 669, 1981], [1870, 725, 1796], [1658, 816, 1560], [1432, 888, 1333], [1327, 919, 1244], [1255, 957, 1155],
];
const trunks = [
  [2508, 457], [2709, 443], [2698, 472], [2252, 541], [2021, 650], [1892, 684], [1720, 728], [1480, 820], [1258, 893], [1150, 925], [1090, 960],
];
const labels: [string, number, number, number][] = [
  ['15149_gauge', 759, 1096, 125],
  ['ChonKemin', 903, 1084, 108],
  ['chon_kemin_1', 1042, 999, 132],
  ['Station chon_kemin_1', 1206, 999, 197],
  ['chon_kemin_2', 1113, 961, 131],
  ['Station chon_kemin_2', 1276, 961, 196],
  ['chon_kemin_3', 1218, 931, 131],
  ['Station chon_kemin_3', 1381, 931, 198],
  ['chon_kemin_4', 1443, 857, 132],
  ['Station chon_kemin_4', 1607, 857, 198],
  ['chon_kemin_5', 1685, 767, 131],
  ['Station chon_kemin_5', 1847, 767, 199],
  ['chon_kemin_6', 1869, 711, 132],
  ['Station chon_kemin_6', 2032, 711, 197],
  ['chon_kemin_7', 2001, 677, 132],
  ['Station chon_kemin_7', 2164, 677, 197],
  ['chon_kemin_8', 2229, 567, 132],
  ['Station chon_kemin_8', 2392, 567, 198],
  ['chon_kemin_9', 2486, 483, 132],
  ['Station chon_kemin_9', 2648, 483, 197],
  ['chon_kemin_10', 2707, 457, 140],
  ['Station chon_kemin_10', 2871, 457, 208],
  ['chon_kemin_11', 2673, 499, 141],
  ['Station chon_kemin_11', 2836, 499, 206],
];

const Diagram = () => (
  <div className="absolute inset-0">
    <svg viewBox="759 347 2325 1891" className="absolute inset-0 w-full h-full">
      {trunks.map(([x, y], i) => (
        <line key={i} x1={x} y1={y} x2={878} y2={1032} stroke={BLUE} strokeWidth="5" />
      ))}
      <polygon points="865,1040 878,1022 886,1034" fill={BLUE} />
      {arrows.map(([x1, y, x2], i) => (
        <g key={i}>
          <line x1={x1} y1={y} x2={x2 + 8} y2={y} stroke={BLUE} strokeWidth="6" />
          <polygon points={`${x2},${y} ${x2 + 11},${y - 8} ${x2 + 11},${y + 8}`} fill={BLUE} />
        </g>
      ))}
      <line x1="909" y1="1047" x2="876" y2="1051" stroke={BLUE} strokeWidth="5" />
      <polygon points="866,1052 878,1043 879,1058" fill={BLUE} />
      {hydros.map(([x, y], i) => (
        <Hydrograph key={i} x={x} y={y} />
      ))}
      {leaves.map(([x, y], i) => (
        <g key={i}>
          <text x={x + 34} y={y + 68} textAnchor="middle" fontFamily="DejaVu Sans Mono, monospace" fontWeight="700" fontSize="16" letterSpacing="1" fill="#111">HBV</text>
          <Leaf x={x} y={y} />
        </g>
      ))}
      <g transform="translate(778 1005)">
        <GaugeIcon />
      </g>
      <g transform="translate(913 993)">
        <RiverIcon fill="#d4a800" label="KW" />
      </g>
    </svg>
    {labels.map(([text, x, y, w]) => (
      <div
        key={text}
        className="absolute h-[29px] border-[3px] border-[#b4b4b8] text-center text-[18.5px] leading-[24px] text-[#111] whitespace-nowrap"
        style={{ left: x - 759, top: y - 347, width: w }}
      >
        {text}
      </div>
    ))}
  </div>
);

export default function App() {
  return (
    <div className="relative w-[3840px] h-[2296px] flex flex-col overflow-hidden bg-white font-['Open_Sans',sans-serif] text-[28px] text-[#111]">
      {/* download progress sliver on top of the title bar */}
      <div className="absolute left-[1619px] top-0 w-[603px] h-[3px] bg-[#e6e6e6]">
        <div className="w-[120px] h-full bg-[#0078d7]" />
      </div>

      <div className="h-[56px] shrink-0 flex items-center pl-[12px] bg-white">
        <svg viewBox="0 0 36 24" className="w-[24px] h-[16px] mt-[2px]">
          <ModelGlyph />
        </svg>
        <span className="ml-[11px] leading-[56px]">RS MINERVE</span>
        <div className="ml-auto flex items-center h-full">
          <svg viewBox="0 0 24 24" className="w-[24px] h-[24px] mr-[90px]">
            <path d="M2 12 H22" stroke="#111" strokeWidth="2" />
          </svg>
          <svg viewBox="0 0 24 24" className="w-[24px] h-[24px] mr-[92px]">
            <path d="M4 7 H18 V22 H4Z M8 7 V2 H22 V18 H18" fill="none" stroke="#111" strokeWidth="2" />
          </svg>
          <svg viewBox="0 0 24 24" className="w-[24px] h-[24px] mr-[49px]">
            <path d="M2 2 L22 22 M22 2 L2 22" stroke="#111" strokeWidth="2" />
          </svg>
        </div>
      </div>

      <div className="h-[62px] shrink-0 flex bg-[#dfe8f4] border-t-2 border-b-[3px] border-[#bccde3]">
        <div className="w-[139px] h-[56px] flex items-center justify-center gap-[8px] rounded-t-[6px] border-2 border-[#1f4fa6] bg-gradient-to-b from-[#86a6d8] via-[#5f86c6] to-[#2a60b4] text-white text-[27px]">
          File
          <svg viewBox="0 0 16 14" className="w-[18px] h-[16px]">
            <path d="M1 1 H15 L8 13Z" fill="#fff" />
          </svg>
        </div>
        <div className="w-[253px] h-[58px] ml-[10px] mt-[2px] flex items-center rounded-t-[8px] border-t-2 border-x-2 border-[#cddaea] bg-gradient-to-b from-[#ffffff] to-[#f8fafd] pl-[24px]">
          <svg viewBox="0 0 36 24" className="w-[36px] h-[24px] mt-[4px]">
            <ModelGlyph />
          </svg>
          <span className="ml-[11px] mt-[5px] text-[28.5px]">Model New</span>
        </div>
        <div className="ml-[46px] flex items-center">
          <svg viewBox="0 0 28 40" className="w-[28px] h-[38px] mt-[4px]">
            <rect width="28" height="40" rx="9" fill="#d0d3d6" />
            <path d="M0 14 H28 M0 27 H28" stroke="#eee" />
          </svg>
          <span className="ml-[15px] mt-[5px]">Database</span>
        </div>
        <div className="ml-[87px] flex items-center">
          <svg viewBox="0 0 36 40" className="w-[36px] h-[40px] mt-[2px]">
            <Globe />
          </svg>
          <span className="ml-[9px] mt-[5px]">GIS</span>
        </div>
      </div>

      <Ribbon />

      <div className="flex-1 min-h-0 flex border-2 border-dotted border-[#222]">
        <div className="w-[53px] shrink-0 pl-[4px] pt-[3px] bg-gradient-to-b from-[#d8e5f5] to-[#e3f1fd]">
          <ChevronCircle dir="left" />
        </div>

        <div className="w-[695px] shrink-0 bg-white">
          <SectionHead title="Hydrology" className="mt-[10px]" />
          <ToolGrid names={['hydrograph', 'rain', 'plane', 'gsm', 'socont', 'hbv', 'gr4j', 'sac', 'scs']} />
          <SectionHead title="River" className="mt-[23px]" />
          <ToolGrid names={['lt', 'kw', 'mc', 'sv']} />
          <SectionHead title="Standard" className="mt-[23px]" />
          <ToolGrid names={['gauge', 'step', 'tap', 'curves', 'model', 'list']} />
          <SectionHead title="Infrastructure" className="mt-[23px]" />
          <ToolGrid names={['reservoir', 'dam', 'pumpBlue', 'pumpOrange', 'bolt', 'junction', 'house', 'tub', 'rating']} />
          <SectionHead title="Solver" className="mt-[22px]" />
          <div className="mt-[19px] pl-[33px]">
            <div className="flex h-[58px]">
              <span className="w-[175px] font-['Liberation_Sans',sans-serif] text-[27.5px] leading-[58px]">Start :</span>
              <DateField value="09/03/2022 00:00:00" />
            </div>
            <div className="flex h-[58px] mt-[11px]">
              <span className="w-[175px] font-['Liberation_Sans',sans-serif] text-[27.5px] leading-[58px]">End :</span>
              <DateField value="10/03/2022 00:00:00" />
            </div>
            <StepRow label="Simulation time step" className="mt-[11px]" />
            <StepRow label="Recording time step:" className="mt-[11px]" />
          </div>
          <div className="flex gap-[6px] ml-[20px] mt-[11px]">
            <button className="w-[278px] h-[59px] border-[3px] border-[#707070] bg-[#dddddd] text-[27px] text-[#111]">Validation</button>
            <button className="w-[278px] h-[59px] border-[3px] border-[#707070] bg-[#dddddd] text-[27px] text-[#111]">Start</button>
          </div>
        </div>

        <div className="w-[9px] shrink-0 bg-[#f0f0f0]" />

        <div className="relative w-[2325px] shrink-0 flex flex-col bg-[#d2d2d2]">
          <div className="h-[22px] shrink-0" />
          <div className="flex-1 min-h-0 flex">
            <div className="w-[22px] shrink-0" />
            <div className="flex-1 bg-white" />
            <div className="w-[2px] shrink-0" />
          </div>
          <div className="h-[25px] shrink-0" />
          <div className="h-[41px] shrink-0 flex bg-[#f0f0f0]">
            <div className="w-[42px] flex items-center justify-center">
              <svg viewBox="0 0 8 20" className="w-[8px] h-[20px]">
                <path d="M6 1 L2 10 L6 19" fill="none" stroke="#888" strokeWidth="1.5" />
              </svg>
            </div>
            <div className="flex-1 bg-[#cacaca]" />
            <div className="w-[79px] flex items-center justify-end pr-[20px]">
              <svg viewBox="0 0 8 20" className="w-[8px] h-[20px]">
                <path d="M2 1 L6 10 L2 19" fill="none" stroke="#888" strokeWidth="1.5" />
              </svg>
            </div>
          </div>
          <Diagram />
        </div>

        <div className="w-[6px] shrink-0 bg-[#f0f0f0]" />

        <div className="w-[696px] shrink-0 bg-white flex flex-col">
          <div className="flex items-center pl-[28px] pt-[15px]">
            <span className="w-[128px] mt-[3px]">Search:</span>
            <div className="w-[512px] h-[55px] border-[3px] border-[#a5acb5] bg-white" />
          </div>
          <div className="pl-[28px] mt-[16px] leading-[38px]">New</div>
          <div className="h-[3px] ml-[3px] mt-[9px] bg-[#d0d0d0]" />
          <div className="pl-[15px] mt-[14px] leading-[38px]">Click Validation to see errors and warnings</div>
        </div>

        <div className="w-[52px] shrink-0 pl-[3px] pt-[3px] bg-gradient-to-b from-[#d8e5f5] to-[#e3f1fd]">
          <ChevronCircle dir="right" />
        </div>
      </div>

      <div className="h-[56px] shrink-0 flex items-center pl-[12px] pt-[3px] bg-[#f0eded]">Creation model finished.</div>
    </div>
  );
}
